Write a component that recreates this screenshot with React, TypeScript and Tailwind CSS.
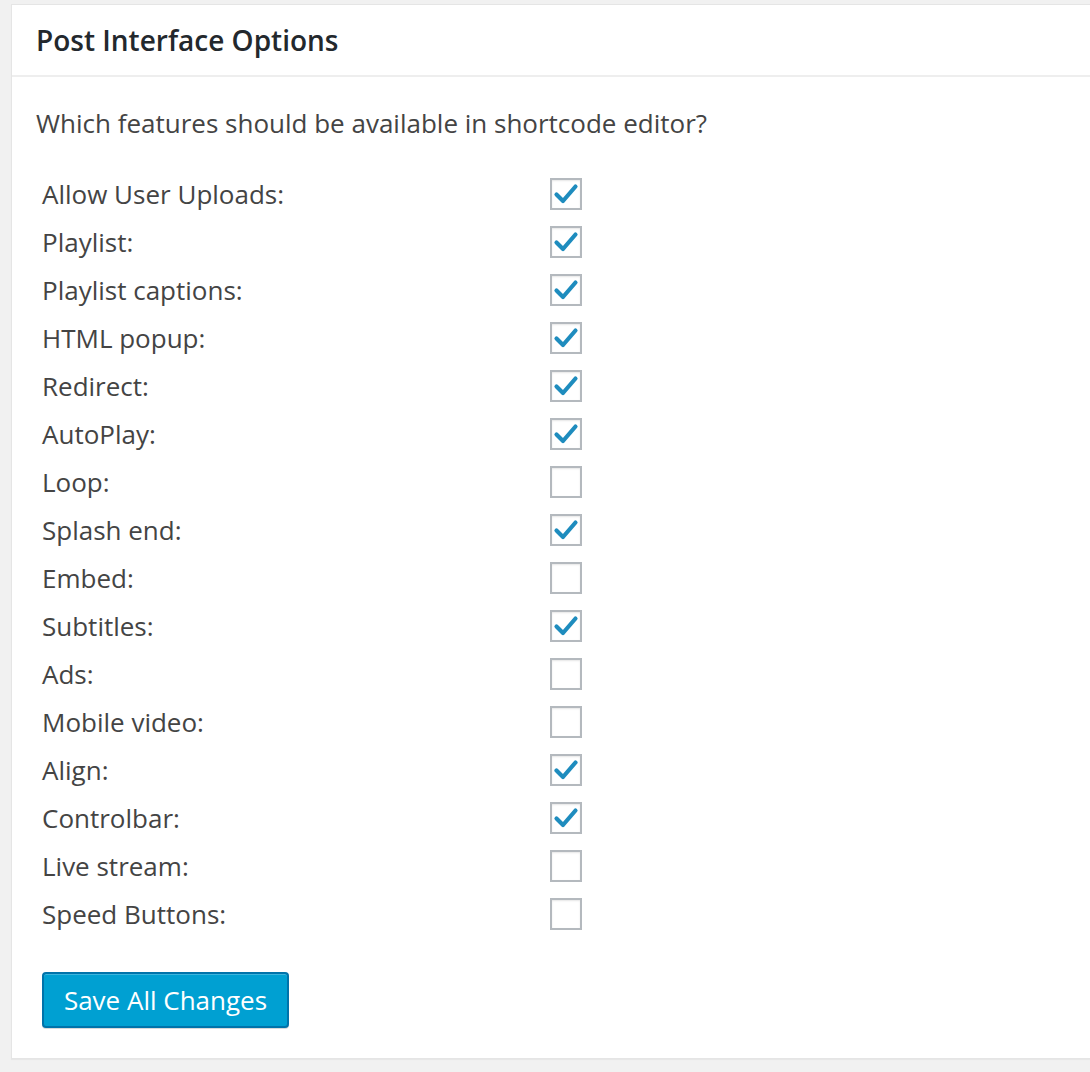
const options: { label: string; checked: boolean }[] = [
  { label: "Allow User Uploads:", checked: true },
  { label: "Playlist:", checked: true },
  { label: "Playlist captions:", checked: true },
  { label: "HTML popup:", checked: true },
  { label: "Redirect:", checked: true },
  { label: "AutoPlay:", checked: true },
  { label: "Loop:", checked: false },
  { label: "Splash end:", checked: true },
  { label: "Embed:", checked: false },
  { label: "Subtitles:", checked: true },
  { label: "Ads:", checked: false },
  { label: "Mobile video:", checked: false },
  { label: "Align:", checked: true },
  { label: "Controlbar:", checked: true },
  { label: "Live stream:", checked: false },
  { label: "Speed Buttons:", checked: false },
];

const CheckBox = ({ checked }: { checked: boolean }) => (
  <span className="w-8 h-8 border-2 border-[#b4b9be] bg-white shadow-[inset_0_1px_2px_rgba(0,0,0,0.1)] flex items-center justify-center">
    {checked && (
      <svg width="28" height="28" viewBox="0 0 28 28">
        <path
          d="M4.5 14.5 L11 21 L23.5 6.5"
          fill="none"
          stroke="#1e8cbe"
          strokeWidth="4.2"
          strokeLinecap="round"
          strokeLinejoin="round"
        />
      </svg>
    )}
  </span>
);

export default function App() {
  return (
    <div className="min-h-[1072px] bg-[#f1f1f1] pt-1 pl-[11px] overflow-hidden font-['Open_Sans',sans-serif] text-[#444]">
      <div className="w-[1100px] bg-white border border-[#e5e5e5] shadow-[0_1px_1px_rgba(0,0,0,0.04)]">
        <div className="h-[72px] px-6 flex items-center border-b-2 border-[#eeeeee]">
          <h2 className="text-[28px] font-semibold text-[#23282d]">Post Interface Options</h2>
        </div>
        <div className="px-6 pt-[30px] pb-[30px]">
          <p className="text-[26px] leading-8">Which features should be available in shortcode editor?</p>
          <div className="mt-[31px] pl-[6px] flex flex-col">
            {options.map((o) => (
              <div key={o.label} className="h-12 flex items-center">
                <span className="w-[508px] text-[26px] text-[#444]">{o.label}</span>
                <CheckBox checked={o.checked} />
              </div>
            ))}
          </div>
          <button
            type="button"
            className="mt-[34px] ml-[6px] w-[247px] h-[56px] rounded-[4px] bg-[#00a0d2] border-2 border-[#0073aa] text-white text-[26px] shadow-[inset_0_1px_0_rgba(120,200,230,0.5),0_1px_0_rgba(0,0,0,0.15)]"
          >
            Save All Changes
          </button>
        </div>
      </div>
    </div>
  );
}
